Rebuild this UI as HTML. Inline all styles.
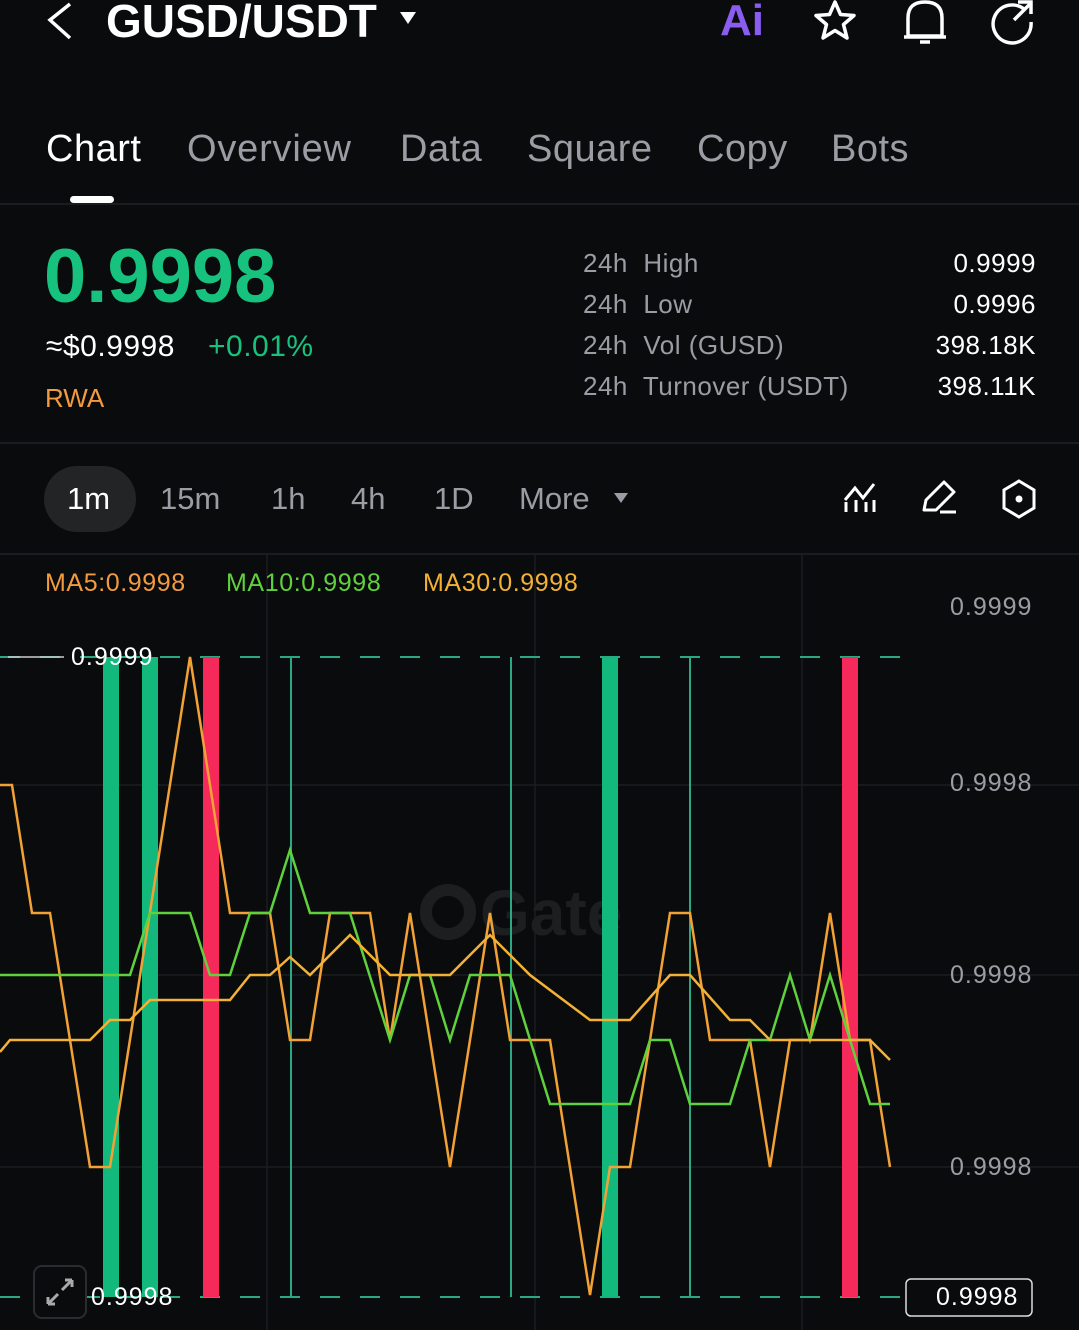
<!DOCTYPE html><html><head><meta charset="utf-8"><style>
body{margin:0;width:1079px;height:1330px;background:#0a0b0c;overflow:hidden;font-family:"Liberation Sans",sans-serif;position:relative;color:#fff}
.a{position:absolute;white-space:nowrap}
.g{color:#9a9ea4}
</style></head><body>
<svg class="a" style="left:0;top:0" width="1079" height="1330">
<path d="M70 4 L50 20 L70 38" stroke="#fff" stroke-width="3.5" fill="none"/>
<path d="M400 12 L416 12 L408 24Z" fill="#fff"/>
<path d="M835 2 L840.5 14.5 L854 15.5 L843.5 24.5 L847 38 L835 30.5 L823 38 L826.5 24.5 L816 15.5 L829.5 14.5 Z" stroke="#fff" stroke-width="3.5" fill="none" stroke-linejoin="round"/>
<path d="M908 36 L908 18 Q908 2 925 2 Q942 2 942 18 L942 36 Z M904 37 H946 M920 42 H930" stroke="#fff" stroke-width="3.5" fill="none"/>
<path d="M1025 10 A19 19 0 1 0 1031 22 M1018 2 H1031 V14 M1031 3 L1014 20" stroke="#fff" stroke-width="3.5" fill="none"/>
<rect x="70" y="196" width="44" height="7" rx="3.5" fill="#fff"/>
<rect x="0" y="203" width="1079" height="2" fill="#1a1c1f"/>
<rect x="0" y="442" width="1079" height="2" fill="#1a1c1f"/>
<rect x="0" y="553" width="1079" height="2" fill="#1a1c1f"/>
<rect x="44" y="466" width="92" height="66" rx="33" fill="#222426"/>
<path d="M614 493 L628 493 L621 503Z" fill="#9a9ea4"/>
<path d="M845 500 L855 488 L863 498 L874 484 M846 512 V502 M856 512 V500 M866 512 V502 M874 512 V500" stroke="#fff" stroke-width="3" fill="none"/>
<path d="M924 510 L926 500 L944 482 L954 492 L936 510 Z M940 512 H956" stroke="#fff" stroke-width="3" fill="none" stroke-linejoin="round"/>
<path d="M1019 481 L1034 490 L1034 508 L1019 517 L1004 508 L1004 490 Z" stroke="#fff" stroke-width="3" fill="none"/><circle cx="1019" cy="499" r="3.5" fill="#fff"/>
<g stroke="#1b1d20" stroke-width="1.5"><line x1="267" y1="555" x2="267" y2="1330"/><line x1="535" y1="555" x2="535" y2="1330"/><line x1="802" y1="555" x2="802" y2="1330"/>
<line x1="0" y1="785" x2="1079" y2="785"/><line x1="0" y1="975" x2="1079" y2="975"/><line x1="0" y1="1167" x2="1079" y2="1167"/></g>
<circle cx="448" cy="912" r="22" stroke="#1c1e20" stroke-width="12" fill="none"/>
<text x="480" y="935" font-size="64" font-weight="bold" fill="#1c1e20" font-family="Liberation Sans">Gate</text>
<g stroke="#2aa883" stroke-width="2" stroke-dasharray="20 20"><line x1="0" y1="657" x2="900" y2="657"/><line x1="0" y1="1297" x2="905" y2="1297"/></g>
<line x1="8" y1="657" x2="64" y2="657" stroke="#ccc" stroke-width="1.5"/>
<g stroke="#2aa883" stroke-width="2"><line x1="291" y1="657" x2="291" y2="1297"/><line x1="511" y1="657" x2="511" y2="1297"/><line x1="690" y1="657" x2="690" y2="1297"/></g>
<g fill="#13b87c"><rect x="103" y="657" width="16" height="640"/><rect x="142" y="657" width="16" height="640"/><rect x="602" y="657" width="16" height="640"/></g>
<g fill="#f5295a"><rect x="203" y="657" width="16" height="640"/><rect x="842" y="657" width="16" height="640"/></g>
<polyline fill="none" stroke="#f2a135" stroke-width="2.5" points="0,785 12,785 32,913 50,913 90,1167 110,1167 190,657 230,913 270,913 290,1040 310,1040 330,913 370,913 390,1040 410,913 450,1167 490,913 510,1040 550,1040 590,1295 610,1167 630,1167 670,913 690,913 710,1040 750,1040 770,1167 790,1040 810,1040 830,913 850,1040 870,1040 890,1167"/>
<polyline fill="none" stroke="#5fd13d" stroke-width="2.5" points="0,975 130,975 150,913 190,913 210,975 230,975 250,913 270,913 290,850 310,913 350,913 390,1040 410,975 430,975 450,1040 470,975 510,975 550,1104 630,1104 650,1040 670,1040 690,1104 730,1104 750,1040 770,1040 790,975 810,1040 830,975 850,1040 870,1104 890,1104"/>
<polyline fill="none" stroke="#f3b236" stroke-width="2.5" points="0,1052 10,1040 90,1040 110,1020 130,1020 150,1000 230,1000 250,975 270,975 290,957 310,975 350,935 390,975 450,975 490,935 530,975 590,1020 630,1020 670,975 690,975 730,1020 750,1020 770,1040 870,1040 890,1060"/>
<rect x="34" y="1266" width="52" height="52" rx="8" fill="#0a0b0c" stroke="#2a2c2f" stroke-width="2"/>
<path d="M48 1304 L58 1294 M48 1304 V1297 M48 1304 H55 M72 1280 L62 1290 M72 1280 V1287 M72 1280 H65" stroke="#aaa" stroke-width="3" fill="none"/>
<rect x="906" y="1279" width="126" height="37" rx="5" fill="#0a0b0c" stroke="#ddd" stroke-width="1.5"/>
</svg>
<div class="a" style="left:106px;top:-6px;font-size:46px;font-weight:bold">GUSD/USDT</div>
<div class="a" style="left:720px;top:-4px;font-size:44px;font-weight:bold;color:#8a5cf0">Ai</div>
<div class="a" style="left:46px;top:128px;font-size:38px;letter-spacing:0.5px">Chart</div>
<div class="a g" style="left:187px;top:128px;font-size:38px;letter-spacing:0.8px">Overview</div>
<div class="a g" style="left:400px;top:128px;font-size:38px;letter-spacing:0.5px">Data</div>
<div class="a g" style="left:527px;top:128px;font-size:38px;letter-spacing:0.5px">Square</div>
<div class="a g" style="left:697px;top:128px;font-size:38px;letter-spacing:0.5px">Copy</div>
<div class="a g" style="left:831px;top:128px;font-size:38px;letter-spacing:0.5px">Bots</div>
<div class="a" style="left:44px;top:233px;font-size:76px;font-weight:bold;color:#17c27f;letter-spacing:0px">0.9998</div>
<div class="a" style="left:46px;top:330px;font-size:30px;letter-spacing:0.5px">≈$0.9998</div>
<div class="a" style="left:208px;top:330px;font-size:30px;color:#17c27f;letter-spacing:0.5px">+0.01%</div>
<div class="a" style="left:45px;top:383px;font-size:26px;color:#f29a3f">RWA</div>
<div class="a g" style="left:583px;top:243px;font-size:26px;line-height:41px;letter-spacing:0.5px">24h&nbsp; High<br>24h&nbsp; Low<br>24h&nbsp; Vol (GUSD)<br>24h&nbsp; Turnover (USDT)</div>
<div class="a" style="right:43px;top:243px;font-size:26px;line-height:41px;text-align:right;letter-spacing:0.5px">0.9999<br>0.9996<br>398.18K<br>398.11K</div>
<div class="a" style="left:67px;top:481px;font-size:31px">1m</div>
<div class="a g" style="left:160px;top:481px;font-size:31px">15m</div>
<div class="a g" style="left:271px;top:481px;font-size:31px">1h</div>
<div class="a g" style="left:351px;top:481px;font-size:31px">4h</div>
<div class="a g" style="left:434px;top:481px;font-size:31px">1D</div>
<div class="a g" style="left:519px;top:481px;font-size:31px">More</div>
<div class="a" style="left:45px;top:569px;font-size:25px;color:#f29a3f;letter-spacing:0.6px">MA5:0.9998</div>
<div class="a" style="left:226px;top:569px;font-size:25px;color:#5fd13d;letter-spacing:0.6px">MA10:0.9998</div>
<div class="a" style="left:423px;top:569px;font-size:25px;color:#f3b236;letter-spacing:0.6px">MA30:0.9998</div>
<div class="a g" style="left:950px;top:593px;font-size:25px;letter-spacing:1px">0.9999</div>
<div class="a g" style="left:950px;top:769px;font-size:25px;letter-spacing:1px">0.9998</div>
<div class="a g" style="left:950px;top:961px;font-size:25px;letter-spacing:1px">0.9998</div>
<div class="a g" style="left:950px;top:1153px;font-size:25px;letter-spacing:1px">0.9998</div>
<div class="a" style="left:71px;top:643px;font-size:25px;letter-spacing:1px">0.9999</div>
<div class="a" style="left:91px;top:1283px;font-size:25px;letter-spacing:1px">0.9998</div>
<div class="a" style="left:936px;top:1283px;font-size:25px;letter-spacing:1px">0.9998</div>
</body></html>
